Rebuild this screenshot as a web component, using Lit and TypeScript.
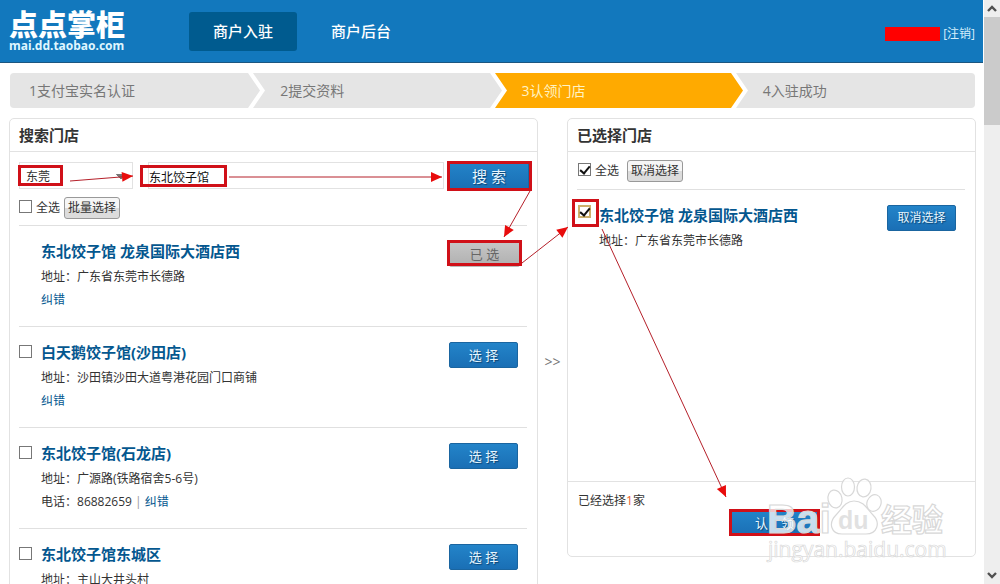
import { LitElement, html, css, svg, nothing } from "lit";
import { customElement, state } from "lit/decorators.js";

interface Shop {
  name: string;
  address: string;
  phone?: string;
  picked?: boolean;
}

const SHOPS: Shop[] = [
  { name: "东北饺子馆 龙泉国际大酒店西", address: "广东省东莞市长德路", picked: true },
  { name: "白天鹅饺子馆(沙田店)", address: "沙田镇沙田大道粤港花园门口商铺" },
  { name: "东北饺子馆(石龙店)", address: "广源路(铁路宿舍5-6号)", phone: "86882659" },
  { name: "东北饺子馆东城区", address: "主山大井头村" },
];

const STEPS = ["1支付宝实名认证", "2提交资料", "3认领门店", "4入驻成功"];

@customElement("app-root")
export class AppRoot extends LitElement {
  @state() private current = 2;

  static styles = css`
    :host {
      display: flex;
      position: relative;
      height: 100vh;
      overflow: hidden;
      background: #fff;
      color: #333;
      font: 12px/24px "Open Sans", "Noto Sans CJK SC", sans-serif;
    }
    * {
      box-sizing: border-box;
    }
    button,
    input,
    select {
      font: inherit;
      margin: 0;
    }
    a {
      color: #04578f;
      text-decoration: none;
    }
    .page {
      flex: 1;
      min-width: 0;
      margin-right: 1px;
    }
    .header {
      display: flex;
      align-items: center;
      height: 63px;
      padding: 0 8px 0 9px;
      background: #1278bd;
      border-bottom: 1px solid #1b5680;
      color: #fff;
    }
    .logo {
      width: 180px;
      color: #fff;
    }
    .logo-name {
      display: block;
      font-size: 29px;
      font-weight: 900;
      line-height: 29px;
    }
    .logo-url {
      display: block;
      font-family: "Noto Sans", sans-serif;
      font-size: 12px;
      font-weight: 700;
      line-height: 14px;
      color: #dff6ff;
    }
    .nav {
      display: flex;
      gap: 10px;
      flex: 1;
    }
    .nav a {
      padding: 0 24px;
      border-radius: 3px;
      color: #fff;
      font-size: 15px;
      font-weight: 500;
      line-height: 39px;
    }
    .nav a.on {
      background: #005b8f;
    }
    .user {
      display: flex;
      align-items: center;
      gap: 3px;
      padding-top: 6px;
    }
    .mask {
      width: 55px;
      height: 14px;
      background: #f00;
    }
    .user a {
      color: #d5effc;
    }
    .steps {
      display: flex;
      margin: 10px 8px 10px 10px;
      padding: 0;
      list-style: none;
      height: 35px;
      border-radius: 4px;
      overflow: hidden;
      background: #e5e5e5;
      color: #777;
      font-size: 14px;
      line-height: 35px;
    }
    .step {
      position: relative;
      width: 25%;
      padding-left: 29px;
    }
    .step:first-child {
      padding-left: 19px;
    }
    .step.on {
      background: #fa0;
      color: #fff3c4;
    }
    .tip {
      position: absolute;
      z-index: 1;
      left: 100%;
      top: 0;
      width: 20px;
      height: 35px;
      margin-left: -3px;
      fill: #e5e5e5;
    }
    .step.on .tip {
      fill: #fa0;
    }
    .columns {
      display: grid;
      grid-template-columns: 529fr 29px 409fr;
      align-items: start;
      padding: 0 7px 0 9px;
    }
    .panel {
      border: 1px solid #e2e2e2;
      border-radius: 5px;
      background: #fff;
    }
    .panel h2 {
      margin: 0;
      padding: 0 9px;
      border-bottom: 1px solid #e2e2e2;
      font-size: 15px;
      font-weight: 700;
      line-height: 32px;
    }
    .body {
      padding: 0 10px 0 9px;
    }
    .search {
      display: flex;
      align-items: center;
      gap: 5px;
      padding-top: 9px;
    }
    .search select,
    .search input {
      height: 27px;
      border: 1px solid #e2e2e2;
      border-radius: 0;
      background: #fff;
      color: #333;
    }
    .search select {
      width: 114px;
      margin-right: 10px;
      padding: 2px 6px 0;
      appearance: none;
      background:
        linear-gradient(to top right, transparent 50%, #777 51%) 96px 11px / 5px 6px no-repeat,
        linear-gradient(to top left, transparent 50%, #777 51%) 101px 11px / 5px 6px no-repeat,
        #fff;
    }
    .search input {
      flex: 1;
      min-width: 0;
      padding: 2px 0 0;
      color: #111;
    }
    .btn {
      height: 26px;
      width: 69px;
      padding: 0;
      border: 1px solid #1a65a0;
      border-radius: 2px;
      background: linear-gradient(#2384c9, #1a6fb5);
      color: #e6f6ff;
      text-shadow: 1px 1px 1px #0b4473;
      line-height: 24px;
    }
    .btn.wide {
      width: 80px;
      font-size: 15px;
    }
    .search .btn {
      height: 29px;
      margin-right: -2px;
    }
    .btn.off {
      width: 71px;
      background: linear-gradient(#c6c6c6, #b0b0b0);
      border-color: #bbb;
      color: #666;
      text-shadow: none;
    }
    .pick {
      font-size: 13px;
    }
    .bulk {
      display: flex;
      align-items: center;
      gap: 4px;
      padding: 6px 0 5px;
      border-bottom: 1px solid #e0e0e0;
    }
    .bulk label {
      display: flex;
      align-items: center;
      gap: 4px;
    }
    .bulk .box {
      margin-bottom: 3px;
    }
    .chosen .bulk {
      gap: 8px;
      padding: 7px 0 6px;
    }
    .plain {
      height: 22px;
      padding: 0 3px;
      border: 1px solid #999;
      border-radius: 3px;
      background: linear-gradient(#f6f6f6 50%, #dcdcdc 50%);
      color: #333;
      line-height: 20px;
    }
    .box {
      appearance: none;
      flex: none;
      width: 13px;
      height: 13px;
      margin: 0;
      border: 1px solid #777;
      background: #fff;
      display: grid;
      place-items: center;
    }
    .box:checked::before {
      content: "";
      width: 4px;
      height: 8px;
      border: solid #111;
      border-width: 0 2px 2px 0;
      transform: rotate(40deg);
      margin-top: -2px;
    }
    .box.hot {
      border: 2px solid #cdb06c;
    }
    .list {
      margin: 0;
      padding: 0;
      list-style: none;
    }
    .shop {
      display: flex;
      align-items: flex-start;
      height: 101px;
      padding-top: 13px;
      border-bottom: 1px solid #e0e0e0;
    }
    .slot {
      width: 22px;
      padding-top: 5px;
      flex: none;
    }
    .info {
      flex: 1;
      min-width: 0;
      white-space: nowrap;
    }
    .info h3 {
      margin: 0 0 2px;
      color: #04578f;
      font-size: 15px;
      font-weight: 700;
      line-height: 24px;
    }
    .info p {
      margin: 0;
      line-height: 24px;
    }
    .info .extra {
      line-height: 22px;
    }
    .shop .btn {
      margin: 2px 9px 0 0;
    }
    .shop .btn.off {
      margin-right: 7px;
    }
    .sep {
      color: #999;
    }
    .between {
      padding-top: 232px;
      text-align: center;
      color: #777;
      font-size: 14px;
    }
    .chosen .shop {
      height: 291px;
      border: 0;
    }
    .chosen .slot {
      padding-top: 2px;
    }
    .chosen .box {
      margin-left: 1px;
    }
    .foot {
      display: flex;
      flex-direction: column;
      height: 75px;
      padding: 7px 10px;
      border-top: 1px solid #e2e2e2;
    }
    .foot p {
      margin: 0;
    }
    .foot b {
      color: #e8602a;
      font-weight: 400;
    }
    .foot .claim {
      align-self: center;
      width: 88px;
      margin: -3px 0 0 6px;
      font-size: 13px;
    }
    .scroll {
      display: flex;
      flex-direction: column;
      justify-content: space-between;
      width: 16px;
      background: #eee;
    }
    .thumb {
      height: 108px;
      background: #cbcbcb;
    }
    .scroll svg {
      display: block;
      width: 16px;
      height: 17px;
      fill: none;
      stroke: #505050;
      stroke-width: 2.4;
    }
    .fill {
      flex: 1;
    }
    .marks {
      position: absolute;
      left: 0;
      top: 0;
      width: 1000px;
      height: 584px;
      pointer-events: none;
    }
    .frame {
      fill: none;
      stroke: #d01018;
      stroke-width: 3;
    }
    .line {
      stroke: #b5202a;
      stroke-width: 1;
    }
    .head {
      fill: #e80c0c;
    }
    .wm {
      fill: #fff;
      fill-opacity: 0.75;
      stroke: #d8d8d8;
      stroke-width: 1.2;
      font-family: "Liberation Sans", "Noto Sans CJK SC", sans-serif;
      font-weight: 700;
    }
    .wm-url {
      font-family: "Open Sans", sans-serif;
      font-weight: 400;
      stroke-width: 0.7;
    }
    .wm-du {
      fill: #d8d8d8;
      stroke: none;
    }
  `;

  private renderShop(s: Shop, i: number) {
    const id = `shop-${i}`;
    const fix = html`<a href="#fix">纠错</a>`;
    return html`<li class="shop">
      <div class="slot">
        ${s.picked ? nothing : html`<input class="box" type="checkbox" id=${id} aria-label=${s.name} />`}
      </div>
      <div class="info">
        <h3>${s.name}</h3>
        <p>地址：${s.address}</p>
        <p class="extra">
          ${s.phone ? html`电话：${s.phone} <span class="sep">|</span> ${fix}` : fix}
        </p>
      </div>
      <button class="btn pick ${s.picked ? "off" : ""}">${s.picked ? "已 选" : "选 择"}</button>
    </li>`;
  }

  private renderMarks() {
    const frames = [
      [19.5, 166.5, 42, 18],
      [141.5, 166.5, 84, 19],
      [448.5, 162.5, 82, 27],
      [448.5, 241.5, 72, 23],
      [573.5, 200.5, 24, 25],
      [730.5, 510.5, 88, 24],
    ];
    const arrows = [
      [70, 181, 133, 176],
      [229, 177, 442, 177],
      [530, 191, 504, 237],
      [522, 263, 568, 227],
      [602, 229, 726, 497],
    ];
    return html`<svg class="marks" viewBox="0 0 1000 584" aria-hidden="true">
      ${frames.map(([x, y, w, h]) => svg`<rect class="frame" x=${x} y=${y} width=${w} height=${h}></rect>`)}
      ${arrows.map(([x1, y1, x2, y2]) => {
        const a = (Math.atan2(y2 - y1, x2 - x1) * 180) / Math.PI;
        return svg`<line class="line" x1=${x1} y1=${y1} x2=${x2} y2=${y2}></line>
          <path class="head" transform="translate(${x2} ${y2}) rotate(${a})" d="M0 0L-11 -5V5Z"></path>`;
      })}
      <g class="wm">
        <text x="767" y="533" font-size="41">Bai</text>
        <path d="M854 501C864 501 867 509 873 515C881 523 877 534 866 534C859 534 849 534 842 534C831 534 828 523 836 515C842 509 845 501 854 501Z"></path>
        <ellipse cx="835" cy="499" rx="7" ry="9" transform="rotate(-12 835 499)"></ellipse>
        <ellipse cx="848" cy="487" rx="6.5" ry="9"></ellipse>
        <ellipse cx="864" cy="488" rx="7" ry="9" transform="rotate(8 864 488)"></ellipse>
        <ellipse cx="874" cy="503" rx="7" ry="8.5" transform="rotate(20 874 503)"></ellipse>
        <text class="wm-du" x="838" y="529" font-size="25">du</text>
        <text x="881" y="531" font-size="31">经验</text>
        <text class="wm-url" x="768" y="557" font-size="21">jingyan.baidu.com</text>
      </g>
    </svg>`;
  }

  render() {
    return html`
      <div class="page">
        <header class="header">
          <a class="logo" href="#home">
            <span class="logo-name">点点掌柜</span>
            <span class="logo-url">mai.dd.taobao.com</span>
          </a>
          <nav class="nav">
            <a class="on" href="#join">商户入驻</a>
            <a href="#admin">商户后台</a>
          </nav>
          <div class="user"><span class="mask"></span><a href="#logout">[注销]</a></div>
        </header>
        <ol class="steps">
          ${STEPS.map(
            (t, i) => html`<li class="step ${i === this.current ? "on" : ""}">
              ${t}
              ${i < 3
                ? html`<svg class="tip" viewBox="0 0 20 35" aria-hidden="true">
                    <path d="M0 0H2L14 17.5L2 35H0Z"></path>
                    <path d="M0 0L12 17.5L0 35H5L17 17.5L5 0Z" fill="#fff"></path>
                  </svg>`
                : nothing}
            </li>`,
          )}
        </ol>
        <main class="columns">
          <section class="panel">
            <h2>搜索门店</h2>
            <div class="body">
              <form class="search" @submit=${(e: Event) => e.preventDefault()}>
                <select aria-label="城市"><option>东莞</option></select>
                <input type="text" aria-label="门店" value="东北饺子馆" />
                <button class="btn wide">搜 索</button>
              </form>
              <div class="bulk">
                <label><input class="box" type="checkbox" />全选</label>
                <button class="plain">批量选择</button>
              </div>
              <ul class="list">
                ${SHOPS.map((s, i) => this.renderShop(s, i))}
              </ul>
            </div>
          </section>
          <div class="between">&gt;&gt;</div>
          <section class="panel chosen">
            <h2>已选择门店</h2>
            <div class="body">
              <div class="bulk">
                <label><input class="box" type="checkbox" checked />全选</label>
                <button class="plain">取消选择</button>
              </div>
              <div class="shop">
                <div class="slot">
                  <input class="box hot" type="checkbox" checked aria-label=${SHOPS[0].name} />
                </div>
                <div class="info">
                  <h3>${SHOPS[0].name}</h3>
                  <p>地址：${SHOPS[0].address}</p>
                </div>
                <button class="btn">取消选择</button>
              </div>
            </div>
            <div class="foot">
              <p>已经选择<b>1</b>家</p>
              <button class="btn claim">认　领</button>
            </div>
          </section>
        </main>
      </div>
      <div class="scroll" aria-hidden="true">
        <svg viewBox="0 0 16 17"><path d="M4 11L8 7L12 11"></path></svg>
        <div class="thumb"></div>
        <div class="fill"></div>
        <svg viewBox="0 0 16 17"><path d="M4 6L8 10L12 6"></path></svg>
      </div>
      ${this.renderMarks()}
    `;
  }
}
